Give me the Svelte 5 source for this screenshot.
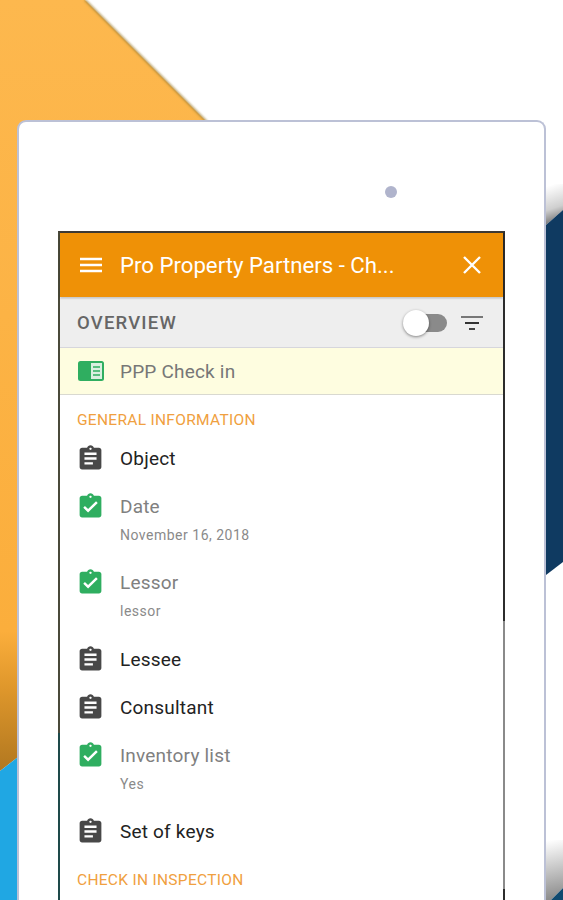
<script>
	const done = 'M19 3h-4.18C14.4 1.84 13.3 1 12 1c-1.3 0-2.4.84-2.82 2H5c-1.1 0-2 .9-2 2v14c0 1.1.9 2 2 2h14c1.1 0 2-.9 2-2V5c0-1.1-.9-2-2-2zm-7 0c.55 0 1 .45 1 1s-.45 1-1 1-1-.45-1-1 .45-1 1-1zm-2 14l-4-4 1.41-1.41L10 14.17l6.59-6.59L18 9l-8 8z';
	const todo = 'M19 3h-4.18C14.4 1.84 13.3 1 12 1c-1.3 0-2.4.84-2.82 2H5c-1.1 0-2 .9-2 2v14c0 1.1.9 2 2 2h14c1.1 0 2-.9 2-2V5c0-1.1-.9-2-2-2zm-7 0c.55 0 1 .45 1 1s-.45 1-1 1-1-.45-1-1 .45-1 1-1zm2 14H7v-2h7v2zm3-4H7v-2h10v2zm0-4H7V7h10v2z';

	const items = [
		{ label: 'Object' },
		{ label: 'Date', value: 'November 16, 2018', filled: true },
		{ label: 'Lessor', value: 'lessor', filled: true },
		{ label: 'Lessee' },
		{ label: 'Consultant' },
		{ label: 'Inventory list', value: 'Yes', filled: true },
		{ label: 'Set of keys' }
	];
</script>

<svg class="backdrop" width="563" height="900" viewBox="0 0 563 900" aria-hidden="true">
	<defs>
		<linearGradient id="amber" gradientUnits="userSpaceOnUse" x1="0" y1="0" x2="0" y2="770">
			<stop offset="0" stop-color="#fdb84e" />
			<stop offset="0.82" stop-color="#fbae3c" />
			<stop offset="0.89" stop-color="#e0982c" />
			<stop offset="1" stop-color="#b27820" />
		</linearGradient>
		<linearGradient id="edge-top" gradientUnits="userSpaceOnUse" x1="548" y1="186" x2="560" y2="222">
			<stop offset="0" stop-color="#ffffff" />
			<stop offset="0.6" stop-color="#cfcfcf" />
			<stop offset="1" stop-color="#6f6f6f" />
		</linearGradient>
		<linearGradient id="edge-bottom" gradientUnits="userSpaceOnUse" x1="550" y1="840" x2="562" y2="896">
			<stop offset="0" stop-color="#ffffff" />
			<stop offset="1" stop-color="#8e8e8e" />
		</linearGradient>
		<filter id="soft" x="-10%" y="-10%" width="120%" height="120%">
			<feGaussianBlur stdDeviation="0.8" />
		</filter>
	</defs>
	<rect width="563" height="900" fill="#fff" />
	<polygon points="0,771 0,0 85,0 207,122 207,757 18,757" fill="url(#amber)" />
	<line x1="85" y1="0" x2="207" y2="122" stroke="#9c7d35" stroke-width="2" opacity="0.8" filter="url(#soft)" />
	<polygon points="0,771 18,757 18,900 0,900" fill="#20a7e3" />
	<polygon points="546,184 563,184 563,210 546,225" fill="url(#edge-top)" />
	<polygon points="546,225 563,210 563,562 546,575" fill="#0f3a61" />
	<polygon points="546,840 563,840 563,888 551,900 546,900" fill="url(#edge-bottom)" />
	<polygon points="563,888 551,900 563,900" fill="#0f4a70" />
</svg>

<div class="page">
	<div class="tablet">
		<div class="camera-row"><span class="camera"></span></div>
		<div class="screen">
			<header class="appbar">
				<svg class="menu" width="24" height="24" viewBox="0 0 24 24" aria-hidden="true">
					<path d="M1 6h22M1 12h22M1 18h22" stroke="#fff" stroke-width="2.400" fill="none" />
				</svg>
				<span class="title">Pro Property Partners - Ch...</span>
				<svg class="close" width="20" height="20" viewBox="0 0 20 20" aria-hidden="true">
					<path d="M2 2l16 16M18 2L2 18" stroke="#fff" stroke-width="2.400" fill="none" />
				</svg>
			</header>

			<div class="overview">
				<span class="overview-label">OVERVIEW</span>
				<span class="switch"><span class="knob"></span></span>
				<svg class="filter" width="22" height="16" viewBox="0 0 22 16" aria-hidden="true">
					<path d="M0 2h22" stroke="#777" stroke-width="2" fill="none" />
					<path d="M4 8h14" stroke="#333" stroke-width="2" fill="none" />
					<path d="M8 14h6" stroke="#444" stroke-width="2" fill="none" />
				</svg>
			</div>

			<div class="form-row">
				<svg class="form-icon" width="26" height="20" viewBox="0 0 26 20" aria-hidden="true">
					<rect width="26" height="20" rx="2.500" fill="#2fae60" />
					<rect x="13" y="2" width="11" height="16" fill="#d9efe0" />
					<path d="M15 6h7M15 10h7M15 14h7" stroke="#2fae60" stroke-width="1.400" />
				</svg>
				<span>PPP Check in</span>
			</div>

			<h2>GENERAL INFORMATION</h2>

			<ul>
				{#each items as item}
					<li class:has-value={item.value}>
						<svg width="29" height="29" viewBox="0 0 24 24" aria-hidden="true">
							<path d={item.filled ? done : todo} fill={item.filled ? '#2fae60' : '#484848'} />
						</svg>
						<div class="text">
							<div class="label" class:filled={item.filled}>{item.label}</div>
							{#if item.value}
								<div class="value">{item.value}</div>
							{/if}
						</div>
					</li>
				{/each}
			</ul>

			<h2 class="second">CHECK IN INSPECTION</h2>
		</div>
	</div>
</div>

<style>
	:global(body) {
		margin: 0;
		overflow: hidden;
		font-family: Roboto, "Liberation Sans", sans-serif;
	}
	.backdrop {
		position: absolute;
		left: 0;
		top: 0;
	}
	.page {
		position: relative;
		width: 563px;
		height: 900px;
		overflow: hidden;
		padding: 120px 17px 0;
		box-sizing: border-box;
	}
	.tablet {
		width: 529px;
		height: 840px;
		box-sizing: border-box;
		background: #fff;
		border: 2px solid #bcc1d6;
		border-bottom: none;
		border-radius: 9px 9px 0 0;
		padding: 0 39px;
	}
	.camera-row {
		height: 109px;
		display: flex;
		justify-content: flex-end;
		padding: 64px 108px 0 0;
		box-sizing: border-box;
	}
	.camera {
		width: 12px;
		height: 12px;
		border-radius: 50%;
		background: #b0b4cc;
	}
	.screen {
		position: relative;
		width: 447px;
		height: 700px;
		box-sizing: border-box;
		border-top: 2px solid #3e3a34;
		border-left: 2px solid #4a4a3a;
		border-right: 2px solid #2c2c2c;
		background: #fff;
	}
	.screen::before {
		content: "";
		position: absolute;
		left: -2px;
		top: 500px;
		width: 2px;
		height: 200px;
		background: #1e4a4a;
	}
	.screen::after {
		content: "";
		position: absolute;
		right: -2px;
		top: 388px;
		width: 2px;
		height: 268px;
		background: #8a8a8a;
	}
	.appbar {
		height: 64px;
		background: #ef9106;
		display: flex;
		align-items: center;
		padding: 0 21px 1px 19px;
		box-sizing: border-box;
		color: #fff;
		box-shadow: 0 1px 2px rgba(0, 0, 0, 0.3);
		position: relative;
	}
	.title {
		margin-left: 17px;
		font-size: 22.200px;
		flex: 1;
		white-space: nowrap;
	}
	.overview {
		height: 50px;
		margin-top: 1px;
		background: #eeeeee;
		display: flex;
		align-items: center;
		padding: 0 20px 0 17px;
		box-sizing: border-box;
		border-bottom: 1px solid #d6d6dc;
	}
	.overview-label {
		flex: 1;
		font-size: 18.500px;
		font-weight: 500;
		color: #666;
		letter-spacing: 1.200px;
	}
	.switch {
		position: relative;
		width: 43px;
		height: 18px;
		border-radius: 9px;
		background: #8a8a8a;
		margin-right: 14px;
	}
	.knob {
		position: absolute;
		left: -1px;
		top: -4px;
		width: 26px;
		height: 26px;
		border-radius: 50%;
		background: #fff;
		box-shadow: 0 1px 3px rgba(0, 0, 0, 0.45);
	}
	.form-row {
		height: 47px;
		background: #fefde0;
		border-bottom: 1px solid #d9d9d0;
		box-sizing: border-box;
		display: flex;
		align-items: center;
		padding-left: 18px;
		font-size: 19px;
		letter-spacing: 0.2px;
		color: #777;
	}
	.form-icon {
		margin-right: 16px;
	}
	h2 {
		margin: 16px 0 0 17px;
		font-size: 15.500px;
		line-height: 18px;
		font-weight: 400;
		color: #f0a040;
		letter-spacing: 0.3px;
	}
	h2.second {
		margin-top: 9px;
	}
	ul {
		list-style: none;
		margin: 12px 0 0;
		padding: 0;
	}
	li {
		display: flex;
		align-items: flex-start;
		padding-left: 16px;
		height: 48px;
	}
	li.has-value {
		height: 76.300px;
	}
	li svg {
		margin-top: 3px;
		flex: none;
	}
	.text {
		margin-left: 15px;
		padding-top: 6px;
	}
	.label {
		font-size: 19px;
		line-height: 24px;
		letter-spacing: 0.2px;
		color: #222;
	}
	.label.filled {
		color: #808080;
	}
	.value {
		margin-top: 6px;
		font-size: 14px;
		line-height: 20px;
		letter-spacing: 0.5px;
		color: #8a8a8a;
	}
</style>
